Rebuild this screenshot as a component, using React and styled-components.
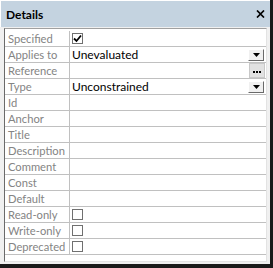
import React from "react";
import styled, { createGlobalStyle } from "styled-components";

const GlobalStyle = createGlobalStyle`
  html, body {
    margin: 0;
    padding: 0;
    background: #ffffff;
  }
  body {
    font-family: Lato, "Noto Sans", sans-serif;
    font-size: 12px;
  }
`;

const Window = styled.div`
  width: 273px;
  height: 268px;
  box-sizing: border-box;
  display: flex;
  flex-direction: column;
  border-right: 3px solid #1a1a1a;
  border-bottom: 4px solid #1a1a1a;
  background: #f0f0f0;
`;

const TitleBar = styled.div`
  height: 27px;
  flex: none;
  box-sizing: border-box;
  display: flex;
  align-items: center;
  justify-content: space-between;
  padding: 0 5px 0 5px;
  background: #c4d3e0;
  border-top: 1px solid #ffffff;
  border-left: 1px solid #ffffff;
`;

const Title = styled.span`
  font-weight: bold;
  font-size: 12px;
  color: #000;
`;

const CloseIcon = styled.svg`
  width: 9px;
  height: 8px;
`;

const Body = styled.div`
  flex: 1;
  display: flex;
  padding: 1px 3px 2px 4px;
  background: #f0f0f0;
`;

const Grid = styled.div`
  flex: 1;
  display: flex;
  flex-direction: column;
  padding-top: 2px;
  background: #ffffff;
  border-left: 1px solid #6a6a6a;
  border-top: 1px solid #a0a0a0;
  border-right: 1px solid #e3e3e3;
  border-bottom: 1px solid #e3e3e3;
`;

const Row = styled.div`
  display: flex;
  height: 16px;
  border-bottom: 1px solid #c0c0c0;
  box-sizing: border-box;
`;

const Label = styled.div`
  width: 65px;
  box-sizing: border-box;
  flex: none;
  padding-left: 3px;
  border-right: 1px solid #c0c0c0;
  color: #848484;
  font-size: 11.2px;
  line-height: 15px;
  white-space: nowrap;
  overflow: hidden;
`;

const Value = styled.div`
  flex: 1;
  display: flex;
  align-items: center;
  justify-content: space-between;
  padding-left: 2px;
  color: #000;
  line-height: 15px;
  white-space: nowrap;
`;

const Check = styled.span`
  width: 11px;
  height: 11px;
  box-sizing: border-box;
  border: 1px solid #707070;
  background: #fff;
  display: flex;
  align-items: center;
  justify-content: center;
`;

const DropButton = styled.span`
  width: 16px;
  height: 12px;
  margin-right: 2px;
  box-sizing: border-box;
  background: #f0f0f0;
  border: 1px solid;
  border-color: #ffffff #6a6a6a #6a6a6a #ffffff;
  display: flex;
  align-items: center;
  justify-content: center;
`;

const DotsButton = styled.span`
  width: 16px;
  height: 15px;
  margin-right: 1px;
  box-sizing: border-box;
  background: #e1e1e1;
  border: 1px solid #c8c8c8;
  display: flex;
  align-items: flex-end;
  justify-content: center;
  padding-bottom: 4px;
`;

const Dot = styled.span`
  width: 2px;
  height: 2px;
  margin: 0 1px 0 0;
  background: #000;
`;

const CheckBox = ({ checked }) => (
  <Check>
    {checked && (
      <svg width="9" height="9" viewBox="0 0 9 9">
        <path d="M1 4.5 L3.5 7 L8 1.5" stroke="#000" strokeWidth="1.8" fill="none" />
      </svg>
    )}
  </Check>
);

const Drop = () => (
  <DropButton>
    <svg width="7" height="4" viewBox="0 0 7 4">
      <path d="M0 0 H7 L3.5 4 Z" fill="#000" />
    </svg>
  </DropButton>
);

const rows = [
  { label: "Specified", check: true },
  { label: "Applies to", text: "Unevaluated", drop: true },
  { label: "Reference", dots: true },
  { label: "Type", text: "Unconstrained", drop: true },
  { label: "Id" },
  { label: "Anchor" },
  { label: "Title" },
  { label: "Description" },
  { label: "Comment" },
  { label: "Const" },
  { label: "Default" },
  { label: "Read-only", check: false },
  { label: "Write-only", check: false },
  { label: "Deprecated", check: false },
];

export default function App() {
  return (
    <>
      <GlobalStyle />
      <Window>
        <TitleBar>
          <Title>Details</Title>
          <CloseIcon viewBox="0 0 9 8">
            <path d="M1 0.5 L8 7.5 M8 0.5 L1 7.5" stroke="#000" strokeWidth="1.7" />
          </CloseIcon>
        </TitleBar>
        <Body>
          <Grid>
            {rows.map((r) => (
              <Row key={r.label}>
                <Label>{r.label}</Label>
                <Value>
                  {r.check !== undefined ? <CheckBox checked={r.check} /> : <span>{r.text}</span>}
                  {r.drop && <Drop />}
                  {r.dots && (
                    <DotsButton>
                      <Dot />
                      <Dot />
                      <Dot />
                    </DotsButton>
                  )}
                </Value>
              </Row>
            ))}
          </Grid>
        </Body>
      </Window>
    </>
  );
}
